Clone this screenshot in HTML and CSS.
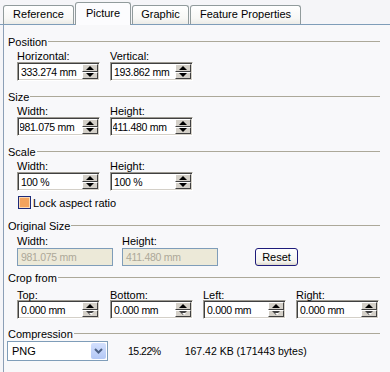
FILE: index.html
```html
<!DOCTYPE html>
<html lang="en">
<head>
    <meta charset="UTF-8">
    <meta name="viewport" content="width=device-width, initial-scale=1.0">
    <title>Picture Properties</title>
    <link rel="stylesheet" href="styles.css">
</head>
<body>
    <div class="tabs">
        <div class="tab tab-ref">Reference</div>
        <div class="tab tab-pic active">Picture</div>
        <div class="tab tab-gfx">Graphic</div>
        <div class="tab tab-feat">Feature Properties</div>
    </div>

    <div class="panel">
        <div class="group">
            <div class="legend"><span>Position</span></div>
            <div class="fields">
                <div class="field">
                    <label>Horizontal:</label>
                    <div class="spinbox"><div class="value">333.274 mm</div><div class="spin"><span class="up"></span><span class="dn"></span></div></div>
                </div>
                <div class="field">
                    <label>Vertical:</label>
                    <div class="spinbox"><div class="value">193.862 mm</div><div class="spin"><span class="up"></span><span class="dn"></span></div></div>
                </div>
            </div>
        </div>

        <div class="group">
            <div class="legend"><span>Size</span></div>
            <div class="fields">
                <div class="field">
                    <label>Width:</label>
                    <div class="spinbox"><div class="value scrolled">981.075 mm</div><div class="spin"><span class="up"></span><span class="dn"></span></div></div>
                </div>
                <div class="field">
                    <label>Height:</label>
                    <div class="spinbox"><div class="value scrolled">411.480 mm</div><div class="spin"><span class="up"></span><span class="dn"></span></div></div>
                </div>
            </div>
        </div>

        <div class="group">
            <div class="legend"><span>Scale</span></div>
            <div class="fields">
                <div class="field">
                    <label>Width:</label>
                    <div class="spinbox"><div class="value">100 %</div><div class="spin"><span class="up"></span><span class="dn"></span></div></div>
                </div>
                <div class="field">
                    <label>Height:</label>
                    <div class="spinbox"><div class="value">100 %</div><div class="spin"><span class="up"></span><span class="dn"></span></div></div>
                </div>
            </div>
        </div>

        <div class="check-row">
            <span class="checkbox"></span>
            <span>Lock aspect ratio</span>
        </div>

        <div class="group group-orig">
            <div class="legend"><span>Original Size</span></div>
            <div class="fields fields-orig">
                <div class="field field-wide">
                    <label>Width:</label>
                    <div class="readonly">981.075 mm</div>
                </div>
                <div class="field field-wide">
                    <label>Height:</label>
                    <div class="readonly">411.480 mm</div>
                </div>
                <button class="reset">Reset</button>
            </div>
        </div>

        <div class="group group-crop">
            <div class="legend"><span>Crop from</span></div>
            <div class="fields">
                <div class="field">
                    <label>Top:</label>
                    <div class="spinbox"><div class="value">0.000 mm</div><div class="spin"><span class="up"></span><span class="dn off"></span></div></div>
                </div>
                <div class="field">
                    <label>Bottom:</label>
                    <div class="spinbox"><div class="value">0.000 mm</div><div class="spin"><span class="up"></span><span class="dn off"></span></div></div>
                </div>
                <div class="field">
                    <label>Left:</label>
                    <div class="spinbox"><div class="value">0.000 mm</div><div class="spin"><span class="up"></span><span class="dn off"></span></div></div>
                </div>
                <div class="field">
                    <label>Right:</label>
                    <div class="spinbox"><div class="value">0.000 mm</div><div class="spin"><span class="up"></span><span class="dn off"></span></div></div>
                </div>
            </div>
        </div>

        <div class="group group-comp">
            <div class="legend"><span>Compression</span></div>
            <div class="comp-row">
                <div class="select">
                    <span>PNG</span>
                    <span class="drop">
                        <svg width="13" height="14" viewBox="0 0 13 14"><polyline points="3,5 6.5,8.5 10,5" fill="none" stroke="#4d6185" stroke-width="2"/></svg>
                    </span>
                </div>
                <span class="ratio">15.22%</span>
                <span class="bytes">167.42 KB (171443 bytes)</span>
            </div>
        </div>
    </div>
</body>
</html>
```

FILE: styles.css
```css
body {
    margin: 0;
    font-family: "Liberation Sans", Arial, sans-serif;
    font-size: 11px;
    color: #000000;
    background-color: #f5f5f8;
    height: 372px;
    overflow: hidden;
}
.tabs {
    display: flex;
    align-items: flex-end;
    height: 24px;
    padding-left: 3px;
    border-bottom: 1px solid #7f9db9;
}
.tab {
    box-sizing: border-box;
    height: 19px;
    margin-right: 1px;
    border: 1px solid #919b9c;
    border-bottom: none;
    border-radius: 3px 3px 0 0;
    background: linear-gradient(#ffffff, #f7f7f5 70%, #ecebe6);
    text-align: center;
    line-height: 17px;
}
.tab.active {
    height: 23px;
    margin-bottom: -1px;
    background: #fcfcfe;
    line-height: 20px;
}
.tab-ref { width: 71px; margin-right: 1px; }
.tab-pic { width: 56px; }
.tab-gfx { width: 57px; }
.tab-feat { width: 111px; }
.panel {
    box-sizing: border-box;
    height: 347px;
    margin-left: 3px;
    border-left: 1px solid #8c9fb6;
    padding: 11px 10px 0 4px;
    background-color: #f8f8fa;
}
.legend {
    display: flex;
    align-items: center;
    height: 13px;
    line-height: 13px;
}
.legend span {
    padding-right: 1px;
}
.legend::after {
    content: "";
    flex: 1;
    border-top: 1px solid #aca899;
    margin-top: -2px;
}
.group {
    margin-bottom: 10px;
}
.fields {
    display: flex;
    gap: 10px;
    margin-left: 9px;
}
.field {
    width: 83px;
}
.field label {
    display: block;
    height: 12px;
    line-height: 12px;
    margin-top: 1px;
}
.spinbox {
    box-sizing: border-box;
    display: flex;
    width: 83px;
    height: 19px;
    padding: 2px 1px 1px 2px;
    border: 1px solid;
    border-color: #9d9a92 #ffffff #ffffff #9d9a92;
    box-shadow: inset 1px 1px 0 #404040, inset -1px -1px 0 #d4d0c8;
    background-color: #ffffff;
}
.value {
    flex: 1;
    padding-left: 1px;
    font-size: 10.5px;
    letter-spacing: -0.3px;
    line-height: 15px;
    overflow: hidden;
    white-space: nowrap;
}
.value.scrolled {
    text-indent: -2px;
}
.spin {
    display: flex;
    flex-direction: column;
    width: 16px;
    margin-top: -1px;
}
.spin span {
    flex: 1;
    position: relative;
    display: flex;
    align-items: center;
    justify-content: center;
    background-color: #d4d0c8;
    border: 1px solid;
    border-color: #ffffff #404040 #404040 #ffffff;
}
.spin .up::before {
    content: "";
    border-left: 4px solid transparent;
    border-right: 4px solid transparent;
    border-bottom: 4px solid #000000;
}
.spin .dn::before {
    content: "";
    border-left: 4px solid transparent;
    border-right: 4px solid transparent;
    border-top: 4px solid #000000;
}
.spin .dn.off::before {
    border-top-color: #404040;
}
.spin .dn.off::after {
    content: "";
    position: absolute;
    left: 6px;
    top: 2px;
    border-left: 2px solid transparent;
    border-right: 2px solid transparent;
    border-top: 2px solid #ffffff;
}
.check-row {
    display: flex;
    align-items: center;
    gap: 2px;
    height: 13px;
    margin: -5px 0 0 10px;
}
.checkbox {
    box-sizing: border-box;
    width: 13px;
    height: 13px;
    border: 1px solid #1c2a7a;
    background-color: #f3a35e;
    box-shadow: inset 0 0 0 1px #fbd9b4;
}
.group-orig {
    margin-top: 11px;
    margin-bottom: 6px;
}
.group-orig label {
    margin-top: 2px;
    height: 13px;
}
.fields-orig {
    gap: 9px;
    align-items: flex-end;
}
.field-wide {
    width: 96px;
}
.readonly {
    box-sizing: border-box;
    height: 18px;
    padding-left: 3px;
    border: 1px solid #7f9db9;
    background-color: #ece9d8;
    color: #aca899;
    font-size: 10.5px;
    letter-spacing: -0.3px;
    line-height: 16px;
}
.reset {
    box-sizing: border-box;
    width: 43px;
    height: 18px;
    margin-left: 28px;
    padding: 0;
    border: 1px solid #1e1b7a;
    border-radius: 3px;
    background: linear-gradient(#ffffff, #f4f3ee 80%, #dcd8ca);
    font-family: inherit;
    font-size: 11px;
    color: #000000;
}
.group-crop {
    margin-bottom: 9px;
}
.group-crop label {
    margin-top: 5px;
    height: 10px;
    line-height: 10px;
}
.comp-row {
    display: flex;
    align-items: center;
    margin-left: -1px;
}
.select {
    box-sizing: border-box;
    display: flex;
    align-items: center;
    width: 101px;
    height: 20px;
    padding: 1px;
    border: 1px solid #7f9db9;
    background-color: #ffffff;
}
.select span {
    padding-left: 3px;
}
.select .drop {
    box-sizing: border-box;
    display: flex;
    align-items: center;
    justify-content: center;
    width: 15px;
    height: 16px;
    margin-left: auto;
    padding: 0;
    border-radius: 2px;
    background: linear-gradient(#d3e0fd, #b3c8f5);
}
.ratio {
    margin-left: 20px;
    font-size: 10.5px;
    letter-spacing: -0.5px;
}
.bytes {
    margin-left: 24px;
    font-size: 10.5px;
}
```
